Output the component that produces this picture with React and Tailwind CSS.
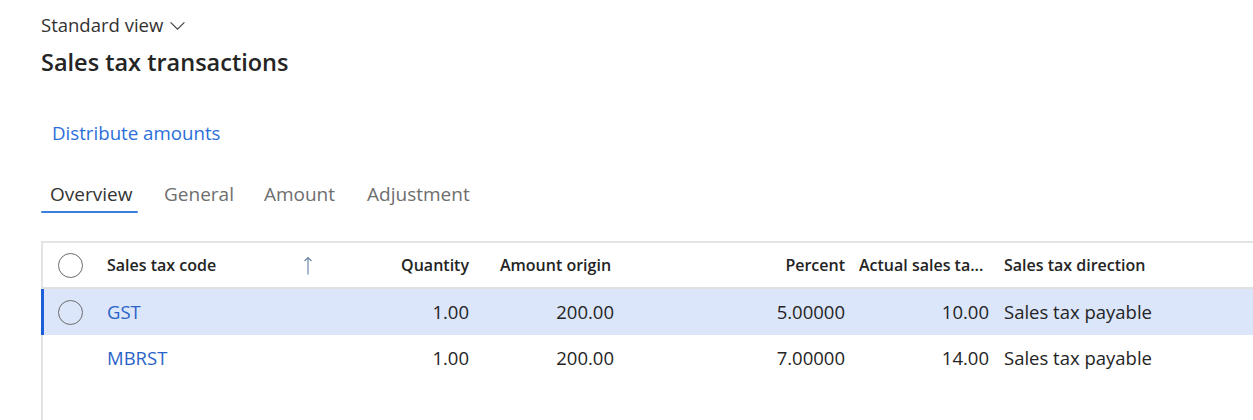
import React from 'react';

const rows = [
  { code: 'GST', qty: '1.00', amount: '200.00', percent: '5.00000', actual: '10.00', direction: 'Sales tax payable', selected: true },
  { code: 'MBRST', qty: '1.00', amount: '200.00', percent: '7.00000', actual: '14.00', direction: 'Sales tax payable', selected: false },
];

const Circle = () => (
  <span className="block w-[25px] h-[25px] rounded-full border-[1.5px] border-[#6b6b6b]" />
);

const App = () => {
  return (
    <div className="w-[1253px] h-[420px] overflow-hidden bg-white text-[#242424]" style={{ fontFamily: '"Open Sans", "Noto Sans", sans-serif' }}>
      <div className="pl-[41px] pt-[12px]">
        {/* view selector */}
        <div className="flex items-center gap-[6px] h-[26px] text-[18.5px] text-[#323130]">
          <span>Standard view</span>
          <svg width="17" height="17" viewBox="0 0 16 16" fill="none" stroke="#424242" strokeWidth="1.1">
            <path d="M1.5 5 8 11.5 14.5 5" />
          </svg>
        </div>
        <h1 className="mt-[10px] h-[30px] flex items-center text-[23.5px] font-semibold text-[#242424]">Sales tax transactions</h1>

        {/* action */}
        <div className="mt-[42px] pl-[11px] h-[26px] flex items-center text-[18.7px] text-[#2b6fdb]">Distribute amounts</div>

        {/* tabs */}
        <div className="mt-[34px] flex text-[19px]">
          <div className="flex flex-col w-[97px]">
            <span className="h-[28px] px-[9px] flex items-center text-[#333333]">Overview</span>
            <span className="mt-[3px] h-[2px] rounded-full bg-[#3b7ee0]" />
          </div>
          <span className="h-[28px] ml-[26px] flex items-center text-[#6e6e6e]">General</span>
          <span className="h-[28px] ml-[30px] flex items-center text-[#6e6e6e]">Amount</span>
          <span className="h-[28px] ml-[32px] flex items-center text-[#6e6e6e]">Adjustment</span>
        </div>

        {/* grid */}
        <div className="mt-[28px] border-l-2 border-t-2 border-[#e4e4e4]">
          <div className="flex items-center h-[46px] border-b-2 border-[#e0e0e0] text-[16px] font-semibold text-[#242424]">
            <div className="w-[15px]" />
            <Circle />
            <div className="w-[24px]" />
            <div className="w-[196px] whitespace-nowrap">Sales tax code</div>
            <svg width="10" height="19" viewBox="0 0 10 19" fill="none" stroke="#6f86a8" strokeWidth="1.2">
              <path d="M5 18.5V1.5M1.5 5 5 1.5 8.5 5" />
            </svg>
            <div className="w-[156px] text-right whitespace-nowrap">Quantity</div>
            <div className="w-[31px]" />
            <div className="w-[115px] whitespace-nowrap">Amount origin</div>
            <div className="w-[230px] text-right">Percent</div>
            <div className="w-[14px]" />
            <div className="w-[130px] whitespace-nowrap">Actual sales ta...</div>
            <div className="w-[15px]" />
            <div className="whitespace-nowrap">Sales tax direction</div>
          </div>
          {rows.map((r) => (
            <div
              key={r.code}
              className={`flex items-center h-[46px] text-[18.5px] ${r.selected ? 'bg-[#dbe6fa] border-l-[3px] border-[#1d5fd8] -ml-[2px]' : ''}`}
            >
              <div className={r.selected ? 'w-[14px]' : 'w-[15px]'} />
              {r.selected ? <Circle /> : <span className="w-[25px]" />}
              <div className="w-[24px]" />
              <div className="w-[204px] text-[#2a63c7]">{r.code}</div>
              <div className="w-[158px] text-right">{r.qty}</div>
              <div className="w-[145px] text-right">{r.amount}</div>
              <div className="w-[231px] text-right">{r.percent}</div>
              <div className="w-[144px] text-right">{r.actual}</div>
              <div className="w-[15px]" />
              <div className="whitespace-nowrap">{r.direction}</div>
            </div>
          ))}
          <div className="h-[60px]" />
        </div>
      </div>
    </div>
  );
};

export default App;
